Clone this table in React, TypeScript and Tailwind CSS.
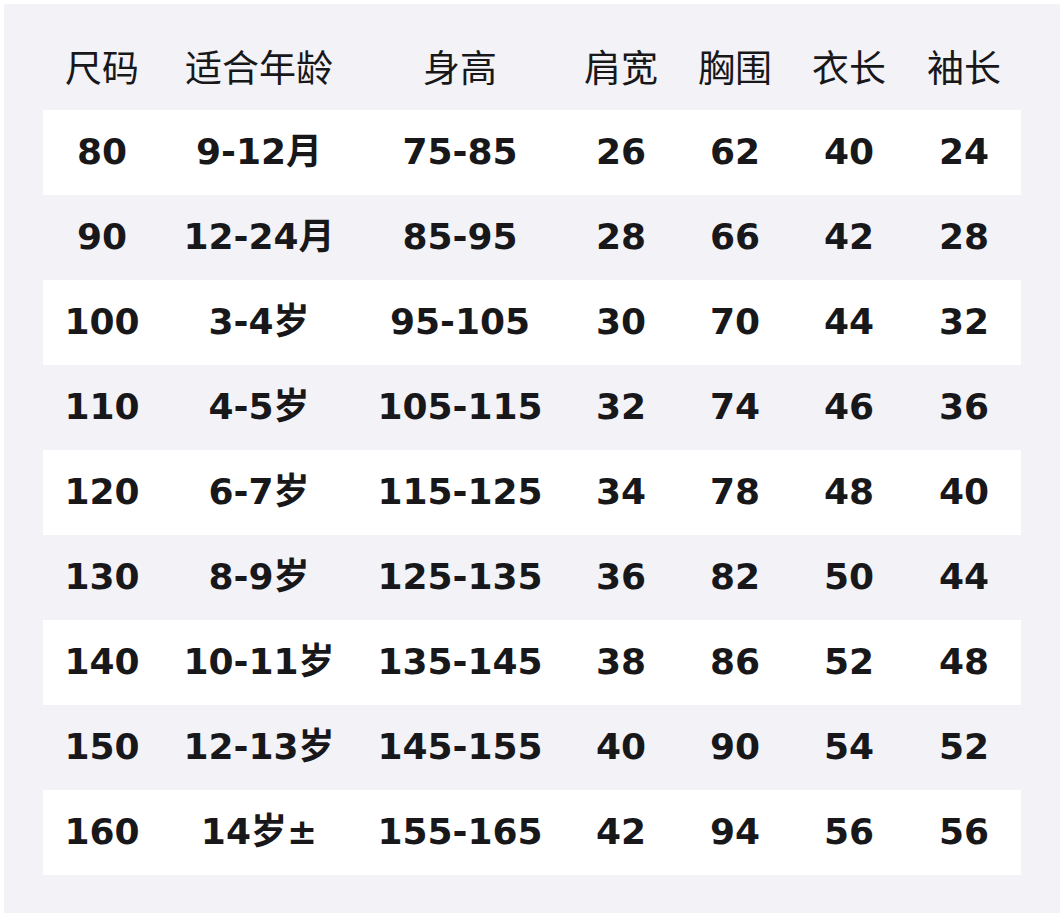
const HEADERS = ['尺码', '适合年龄', '身高', '肩宽', '胸围', '衣长', '袖长'];

const ROWS: string[][] = [
  ['80', '9-12月', '75-85', '26', '62', '40', '24'],
  ['90', '12-24月', '85-95', '28', '66', '42', '28'],
  ['100', '3-4岁', '95-105', '30', '70', '44', '32'],
  ['110', '4-5岁', '105-115', '32', '74', '46', '36'],
  ['120', '6-7岁', '115-125', '34', '78', '48', '40'],
  ['130', '8-9岁', '125-135', '36', '82', '50', '44'],
  ['140', '10-11岁', '135-145', '38', '86', '52', '48'],
  ['150', '12-13岁', '145-155', '40', '90', '54', '52'],
  ['160', '14岁±', '155-165', '42', '94', '56', '56'],
];

const COLS = 'grid w-[978px] grid-cols-[118px_196px_206px_116px_112px_116px_114px]';

export default function App() {
  return (
    <div className="w-[1064px] h-[918px] bg-white p-[4px] font-['DejaVu_Sans','Noto_Sans_CJK_SC',sans-serif] text-[#18181a]">
      <div className="w-[1056px] h-[909px] bg-[#f2f2f7] pt-[26px] pl-[39px]">
        {/* header */}
        <div className={`${COLS} h-[80px] items-center text-[37px] font-['Noto_Sans_CJK_SC',sans-serif]`}>
          {HEADERS.map(h => (
            <div key={h} className="text-center leading-none pb-[8px]">{h}</div>
          ))}
        </div>

        {/* rows */}
        {ROWS.map((r, i) => (
          <div
            key={r[0]}
            className={`${COLS} h-[85px] items-center text-[36px] font-bold ${i % 2 === 0 ? 'bg-white' : ''}`}
          >
            {r.map((c, j) => (
              <div key={j} className="text-center leading-none pb-[2px]">{c}</div>
            ))}
          </div>
        ))}
      </div>
    </div>
  );
}
